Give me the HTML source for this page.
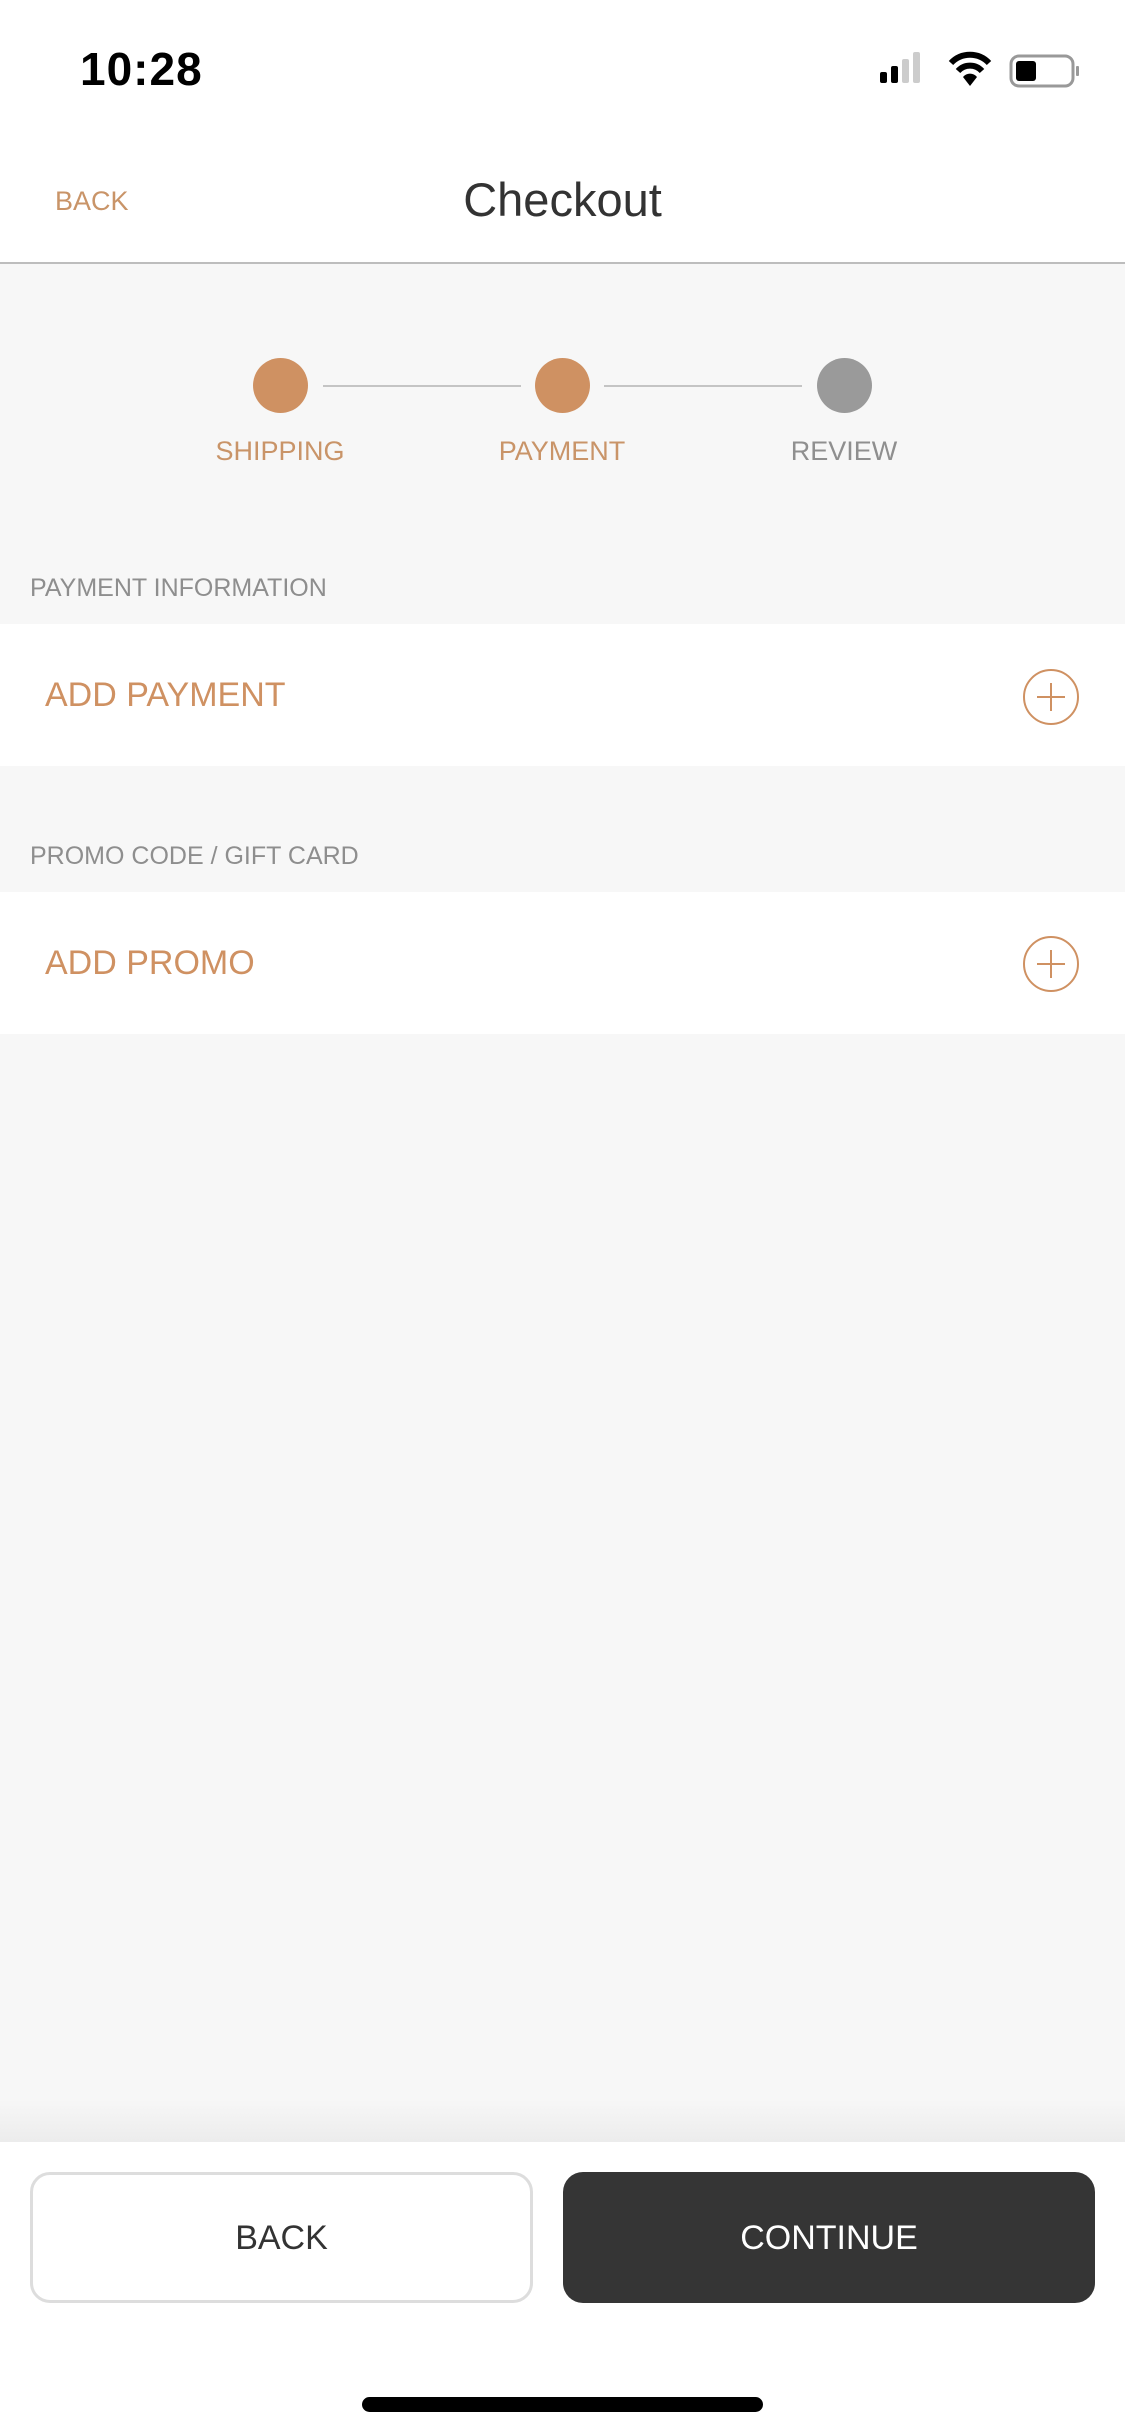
<!DOCTYPE html>
<html><head><meta charset="utf-8"><style>
*{margin:0;padding:0;box-sizing:border-box}
body{width:1125px;height:2436px;background:#f7f7f7;font-family:"Liberation Sans",sans-serif;position:relative;overflow:hidden}
.abs{position:absolute}
.t{position:absolute;white-space:nowrap;line-height:1}
</style></head><body>
<div class="abs" style="left:0;top:0;width:1125px;height:264px;background:#fff;border-bottom:2px solid #bdbdbd"></div>
<div class="t" style="left:80px;top:46px;font-size:46px;font-weight:bold;color:#000;letter-spacing:1px">10:28</div>
<svg class="abs" style="left:878px;top:46px" width="205" height="46" viewBox="0 0 205 46">
<rect x="2" y="26" width="7" height="11" rx="2" fill="#000"/>
<rect x="13" y="20" width="7" height="17" rx="2" fill="#000"/>
<rect x="24" y="13" width="7" height="24" rx="2" fill="#ccc"/>
<rect x="35" y="6" width="7" height="31" rx="2" fill="#ccc"/>
<g transform="translate(19,0)">
<path d="M54 17 A26 26 0 0 1 92 17" stroke="#000" stroke-width="6" fill="none"/>
<path d="M61 25 A16 16 0 0 1 85 25" stroke="#000" stroke-width="6" fill="none"/>
<path d="M66 31 L73 40 L80 31 A9 9 0 0 0 66 31Z" fill="#000"/>
</g>
<rect x="133" y="10" width="62" height="30" rx="8" stroke="#999" stroke-width="3" fill="none"/>
<rect x="138" y="15" width="20" height="20" rx="3" fill="#000"/>
<rect x="198" y="20" width="3" height="10" rx="1" fill="#999"/>
</svg>
<div class="t" style="left:55px;top:188px;font-size:27px;color:#c99468">BACK</div>
<div class="t" style="left:0;width:1125px;text-align:center;top:176px;font-size:47px;color:#333">Checkout</div>

<div class="abs" style="left:253px;top:358px;width:55px;height:55px;border-radius:50%;background:#cf9162"></div>
<div class="abs" style="left:535px;top:358px;width:55px;height:55px;border-radius:50%;background:#cf9162"></div>
<div class="abs" style="left:817px;top:358px;width:55px;height:55px;border-radius:50%;background:#9a9a9a"></div>
<div class="abs" style="left:323px;top:385px;width:198px;height:2px;background:#c4c4c4"></div>
<div class="abs" style="left:604px;top:385px;width:198px;height:2px;background:#c4c4c4"></div>
<div class="t" style="left:180px;width:200px;text-align:center;top:438px;font-size:27px;color:#c99468">SHIPPING</div>
<div class="t" style="left:462px;width:200px;text-align:center;top:438px;font-size:27px;color:#c99468">PAYMENT</div>
<div class="t" style="left:744px;width:200px;text-align:center;top:438px;font-size:27px;color:#8f8f8f">REVIEW</div>

<div class="t" style="left:30px;top:576px;font-size:25px;color:#8e8e8e">PAYMENT INFORMATION</div>
<div class="abs" style="left:0;top:624px;width:1125px;height:142px;background:#fff"></div>
<div class="t" style="left:45px;top:678px;font-size:34px;color:#cf9162">ADD PAYMENT</div>
<svg class="abs" style="left:1020px;top:666px" width="62" height="62" viewBox="0 0 62 62"><circle cx="31" cy="31" r="27" stroke="#cf9162" stroke-width="2" fill="none"/><path d="M17 31H45M31 17V45" stroke="#cf9162" stroke-width="2"/></svg>

<div class="t" style="left:30px;top:844px;font-size:25px;color:#8e8e8e">PROMO CODE / GIFT CARD</div>
<div class="abs" style="left:0;top:892px;width:1125px;height:142px;background:#fff"></div>
<div class="t" style="left:45px;top:946px;font-size:34px;color:#cf9162">ADD PROMO</div>
<svg class="abs" style="left:1020px;top:933px" width="62" height="62" viewBox="0 0 62 62"><circle cx="31" cy="31" r="27" stroke="#cf9162" stroke-width="2" fill="none"/><path d="M17 31H45M31 17V45" stroke="#cf9162" stroke-width="2"/></svg>

<div class="abs" style="left:0;top:2100px;width:1125px;height:42px;background:linear-gradient(#f7f7f7,#ececec)"></div>
<div class="abs" style="left:0;top:2142px;width:1125px;height:294px;background:#fff"></div>
<div class="abs" style="left:30px;top:2172px;width:503px;height:131px;border:3px solid #ddd;border-radius:20px;background:#fff"></div>
<div class="t" style="left:30px;width:503px;text-align:center;top:2221px;font-size:34px;color:#333">BACK</div>
<div class="abs" style="left:563px;top:2172px;width:532px;height:131px;border-radius:20px;background:#353535"></div>
<div class="t" style="left:563px;width:532px;text-align:center;top:2221px;font-size:34px;color:#fff">CONTINUE</div>
<div class="abs" style="left:362px;top:2397px;width:401px;height:15px;border-radius:8px;background:#000"></div>
</body></html>
